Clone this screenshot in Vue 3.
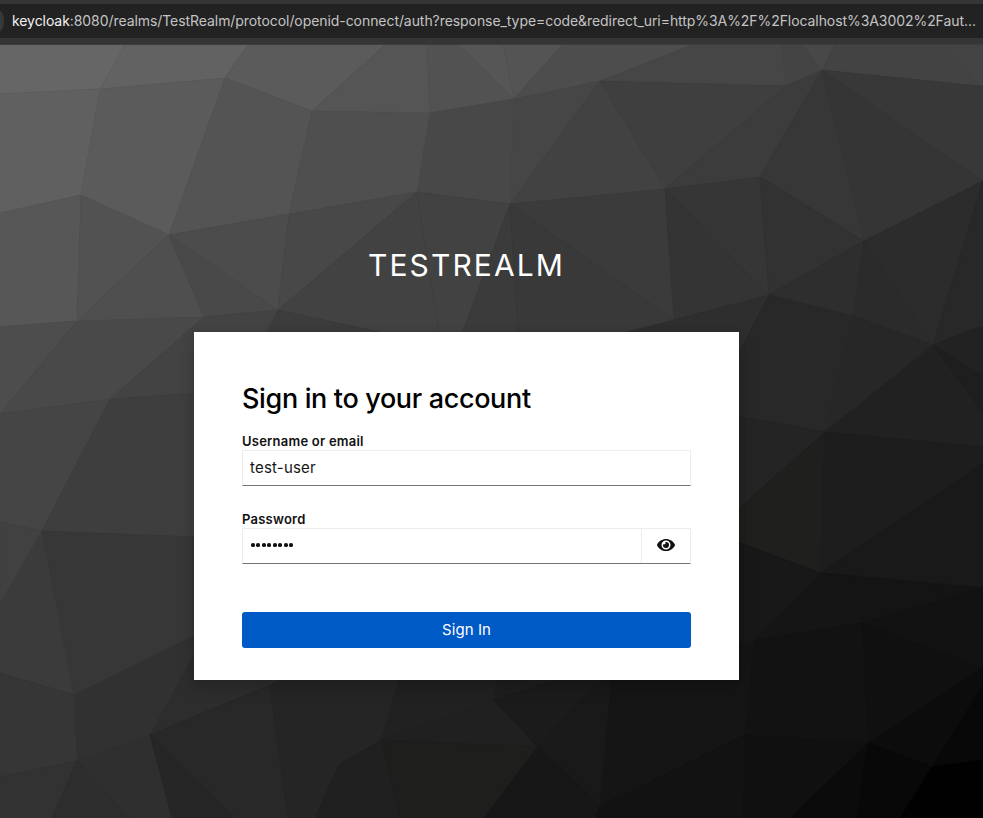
<script setup>
import { ref } from 'vue'

const username = ref('test-user')
const passwordDots = 8

// Background facets: [grey level, polygon points]
const facets = [
  [0x66, '0,45 125,45 100,89 0,94'],
  [0x62, '125,45 248,45 225,78 100,89'],
  [0x5b, '248,45 385,45 312,111 225,78'],
  [0x55, '385,45 427,45 430,113 312,111'],
  [0x52, '427,45 459,45 514,99 430,113'],
  [0x56, '459,45 503,45 514,99'],
  [0x54, '503,45 562,45 514,99'],
  [0x4d, '562,45 693,45 600,81 514,99'],
  [0x46, '693,45 782,45 786,86 600,81'],
  [0x44, '782,45 803,45 822,70 786,86'],
  [0x48, '803,45 835,45 822,70'],
  [0x43, '835,45 945,45 980,86 822,70'],
  [0x44, '945,45 983,45 983,86 980,86'],
  [0x60, '0,94 100,89 81,195 0,213'],
  [0x5b, '100,89 225,78 169,235 81,195'],
  [0x54, '225,78 312,111 289,214 169,235'],
  [0x4f, '312,111 430,113 417,192 289,214'],
  [0x48, '430,113 514,99 510,204 417,192'],
  [0x46, '514,99 600,81 510,204'],
  [0x42, '600,81 665,189 510,204'],
  [0x3f, '600,81 786,86 665,189'],
  [0x3c, '786,86 822,70 760,177 665,189'],
  [0x37, '822,70 864,241 760,177'],
  [0x35, '822,70 983,181 864,241'],
  [0x38, '822,70 980,86 983,86 983,181'],
  [0x57, '0,213 81,195 77,321 0,327'],
  [0x52, '81,195 169,235 77,321'],
  [0x4f, '169,235 204,317 77,321'],
  [0x49, '169,235 278,310 204,317'],
  [0x4c, '169,235 289,214 278,310'],
  [0x48, '289,214 417,192 278,310'],
  [0x42, '417,192 441,345 278,310'],
  [0x42, '417,192 510,204 458,345 441,345'],
  [0x3b, '510,204 519,345 458,345'],
  [0x39, '510,204 674,320 600,345 519,345'],
  [0x3b, '510,204 665,189 674,320'],
  [0x34, '665,189 769,295 674,320'],
  [0x36, '665,189 760,177 769,295'],
  [0x32, '760,177 864,241 769,295'],
  [0x2e, '864,241 854,316 769,295'],
  [0x2b, '864,241 933,345 854,316'],
  [0x2c, '864,241 983,181 933,345'],
  [0x28, '983,181 983,326 933,345'],
  [0x4d, '0,327 77,321 0,414'],
  [0x49, '77,321 204,317 110,399 0,414'],
  [0x43, '204,317 278,310 290,345 200,393 110,399'],
  [0x3c, '278,310 400,337 400,345 260,345'],
  [0x2e, '600,339 674,320 769,295 739,360 700,345'],
  [0x28, '769,295 854,316 825,432 735,416 735,360'],
  [0x27, '854,316 933,345 825,432'],
  [0x21, '933,345 983,413 983,447 825,432'],
  [0x1e, '933,345 983,375 983,413'],
  [0x22, '933,345 983,326 983,375'],
  [0x45, '0,414 110,399 42,531 0,522'],
  [0x3e, '110,399 200,393 200,537 42,531'],
  [0x3b, '42,531 74,695 0,673 0,603'],
  [0x41, '0,522 42,531 0,603'],
  [0x37, '42,531 200,537 200,633 74,695'],
  [0x31, '74,695 200,633 200,645 150,735 77,761'],
  [0x36, '0,673 74,695 77,761 0,777'],
  [0x32, '0,777 77,761 52,818 0,818'],
  [0x2d, '77,761 130,818 52,818'],
  [0x2f, '77,761 150,735 172,818 130,818'],
  [0x2d, '150,735 200,645 300,670 270,685'],
  [0x28, '150,735 270,685 288,818 235,818'],
  [0x26, '150,735 235,818 172,818'],
  [0x25, '270,685 300,670 400,676 381,740 339,765 315,818 288,818'],
  [0x20, '339,765 381,740 400,818 315,818'],
  [0x21, '381,740 400,676 500,676 494,700'],
  [0x20, '381,740 494,700 538,747'],
  [0x1e, '381,740 538,747 484,818 400,818', 0x1c],
  [0x1e, '494,700 498,676 570,676'],
  [0x1b, '494,700 570,676 602,676 538,747'],
  [0x19, '538,747 602,676 612,676 600,806'],
  [0x17, '538,747 600,806 595,818 484,818'],
  [0x15, '612,676 735,676 735,642 755,640 745,735 600,806'],
  [0x12, '600,806 745,735 743,818 595,818'],
  [0x24, '735,416 825,432 735,512'],
  [0x1f, '735,512 825,432 821,573 735,541', 0x1d],
  [0x1d, '825,432 983,447 983,463 821,573'],
  [0x19, '983,463 983,588 821,573'],
  [0x18, '735,541 821,573 755,640 735,643'],
  [0x15, '821,573 862,623 755,640'],
  [0x14, '821,573 983,588 862,623'],
  [0x12, '862,623 983,588 983,668'],
  [0x12, '755,640 862,623 868,743 745,735'],
  [0x10, '862,623 983,668 868,743'],
  [0x0c, '983,668 983,685 932,767 868,743'],
  [0x08, '983,685 983,760 932,767'],
  [0x10, '745,735 868,743 790,818 743,818'],
  [0x0b, '868,743 857,818 790,818'],
  [0x08, '868,743 932,767 900,818 857,818'],
  [0x01, '932,767 983,760 983,818 900,818'],
].map(([level, points, blue = level]) => ({ points, color: `rgb(${level},${level},${blue})` }))
</script>

<template>
  <div class="window">
    <header class="toolbar">
      <div class="address">
        <span class="chip"></span>
        <span class="url"><b>keycloak</b>:8080/realms/TestRealm/protocol/openid-connect/auth?response_type=code&amp;redirect_uri=http%3A%2F%2Flocalhost%3A3002%2Faut...</span>
      </div>
    </header>

    <main class="page">
      <svg class="backdrop" viewBox="0 45 983 773" aria-hidden="true">
        <polygon v-for="(f, i) in facets" :key="i" :points="f.points" :fill="f.color" :stroke="f.color" stroke-width="0.6" />
      </svg>

      <div class="login">
        <div class="realm">TESTREALM</div>
        <form class="card" @submit.prevent>
          <h1><span>Sign in to your account</span></h1>
          <label for="username">Username or email</label>
          <div class="field">
            <input id="username" v-model="username" type="text" />
          </div>
          <label for="password">Password</label>
          <div class="field">
            <div id="password" class="dots">
              <i v-for="n in passwordDots" :key="n"></i>
            </div>
            <button class="reveal" type="button">
              <svg viewBox="0 0 576 512" width="18" height="16">
                <path d="M572.52 241.4C518.29 135.59 410.93 64 288 64S57.68 135.64 3.48 241.41a32.35 32.35 0 0 0 0 29.19C57.71 376.41 165.07 448 288 448s230.32-71.64 284.52-177.41a32.35 32.35 0 0 0 0-29.19zM288 400a144 144 0 1 1 144-144 143.93 143.93 0 0 1-144 144zm0-240a95.31 95.31 0 0 0-25.31 3.79 47.85 47.85 0 0 1-66.9 66.9A95.78 95.78 0 1 0 288 160z" />
              </svg>
            </button>
          </div>
          <button class="submit" type="submit">Sign In</button>
        </form>
      </div>
    </main>
  </div>
</template>

<style>
body {
  margin: 0;
  background: #222;
}
</style>

<style scoped>
* {
  box-sizing: border-box;
}
.window {
  width: 983px;
  height: 818px;
  overflow: hidden;
  font-family: Inter, "Liberation Sans", sans-serif;
}
.toolbar {
  height: 45px;
  padding-top: 4px;
  background: #353535;
  border-bottom: 1px solid #3d3d3d;
}
.address {
  display: flex;
  align-items: center;
  height: 34px;
  background: #222;
}
.chip {
  flex: none;
  width: 4px;
  height: 20px;
  margin-right: 8px;
  border-radius: 0 4px 4px 0 / 0 10px 10px 0;
  background: #383838;
}
.url {
  white-space: nowrap;
  font-size: 14px;
  line-height: 20px;
  letter-spacing: -0.068px;
  color: #c4c4c4;
}
.url b {
  font-weight: 400;
  color: #f2f2f2;
}
.page {
  display: grid;
  height: 773px;
  background: #222;
}
.backdrop,
.login {
  grid-area: 1 / 1;
}
.backdrop {
  display: block;
  width: 983px;
  height: 773px;
}
.login {
  width: 545px;
  margin-left: 194px;
  z-index: 1;
}
.realm {
  height: 287px;
  padding: 200px 0 0 174px;
  font-size: 30px;
  line-height: 40px;
  letter-spacing: 2.1px;
  white-space: nowrap;
  color: #fff;
}
.card {
  display: flex;
  flex-direction: column;
  height: 348px;
  padding: 48px 48px 32px;
  background: #fff;
  box-shadow: 0 8px 16px rgba(0, 0, 0, 0.16), 0 0 6px rgba(0, 0, 0, 0.1);
}
h1 {
  margin: 0 0 13px;
  height: 40px;
  line-height: 37px;
  font-size: 27px;
  font-weight: 500;
  letter-spacing: -0.35px;
  white-space: nowrap;
  color: #000;
}
label {
  height: 17px;
  align-self: flex-start;
  font-size: 13px;
  line-height: 17px;
  font-weight: 600;
  letter-spacing: 0.23px;
  color: #111;
}
.field {
  display: flex;
  height: 36px;
  margin-bottom: 25px;
  border: 1px solid #ededed;
  border-bottom-color: #72767b;
}
input {
  width: 100%;
  padding: 0 7px 1px;
  border: 0;
  outline: 0;
  background: transparent;
  font: 400 15px Inter, sans-serif;
  letter-spacing: 0.2px;
  color: #151515;
}
.dots {
  display: flex;
  flex: 1;
  align-items: center;
  gap: 1.8px;
  padding: 0 0 2px 8px;
}
.dots i {
  width: 3.7px;
  height: 3.7px;
  border-radius: 50%;
  background: #111;
}
.reveal {
  display: flex;
  align-items: center;
  justify-content: center;
  width: 49px;
  padding: 0 0 2px;
  border: 0;
  border-left: 1px solid #ededed;
  background: transparent;
}
.reveal svg {
  fill: #111;
}
.submit {
  height: 36px;
  margin-top: auto;
  padding: 0 0 2px;
  border: 0;
  border-radius: 3px;
  background: #005ac6;
  font: 400 15px Inter, sans-serif;
  letter-spacing: 0.1px;
  color: #fff;
}
</style>
